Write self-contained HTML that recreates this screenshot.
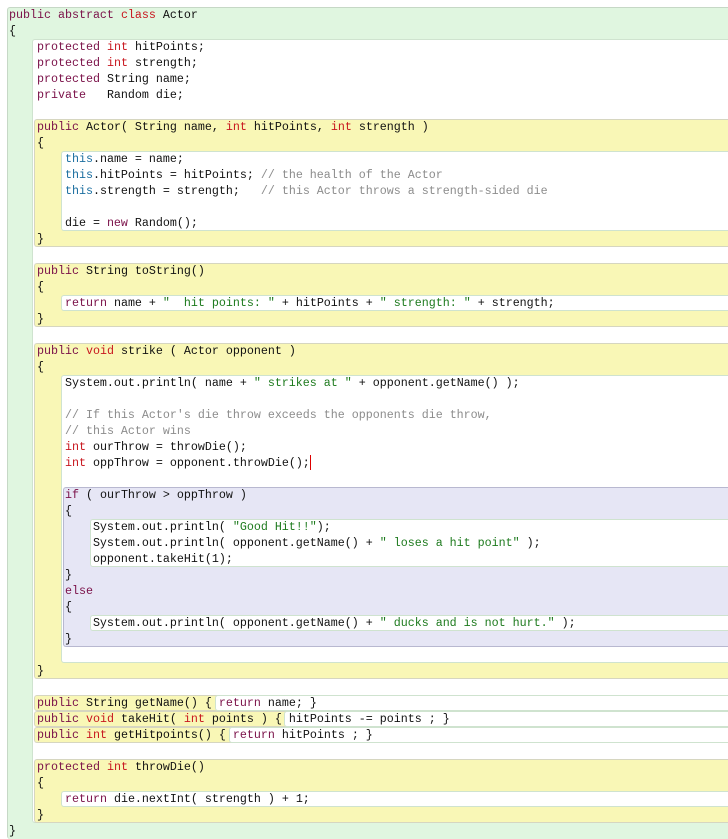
<!DOCTYPE html>
<html><head><meta charset="utf-8"><style>
html,body{margin:0;width:728px;height:839px;overflow:hidden;background:#fff;position:relative}
.b{position:absolute;box-sizing:border-box;border-radius:3px}
.g{background:#e0f6e0;border:1px solid #c6d8c6;border-bottom:none}
.w{background:#fff;border:1px solid #cfe3cf;border-right:none}
.y{background:#f9f7b6;border:1px solid #d6d6c0;border-right:none}
.p{background:#e6e6f5;border:1px solid #b8b8d0;border-right:none}
pre{position:absolute;left:9px;top:7px;margin:0;font-family:"Liberation Mono",monospace;font-size:11.67px;line-height:16px;color:#111}
.k{color:#7a1048}.r{color:#c8161e}.t{color:#1b6ea0}.s{color:#1d7a1d}.c{color:#8c8c8c}
</style></head><body>
<div class="b g" style="left:7px;top:7px;width:740px;height:832px"></div>
<div class="b w" style="left:32px;top:39px;width:720px;height:784px"></div>
<div class="b y" style="left:34px;top:119px;width:720px;height:128px"></div>
<div class="b w" style="left:61px;top:151px;width:700px;height:80px"></div>
<div class="b y" style="left:34px;top:263px;width:720px;height:64px"></div>
<div class="b w" style="left:61px;top:295px;width:700px;height:16px"></div>
<div class="b y" style="left:34px;top:343px;width:720px;height:336px"></div>
<div class="b w" style="left:61px;top:375px;width:700px;height:288px"></div>
<div class="b p" style="left:63px;top:487px;width:700px;height:160px"></div>
<div class="b w" style="left:90px;top:519px;width:700px;height:48px"></div>
<div class="b w" style="left:90px;top:615px;width:700px;height:16px"></div>
<div class="b y" style="left:34px;top:695px;width:720px;height:16px"></div>
<div class="b w" style="left:215px;top:695px;width:600px;height:16px"></div>
<div class="b y" style="left:34px;top:711px;width:720px;height:16px"></div>
<div class="b w" style="left:284px;top:711px;width:600px;height:16px"></div>
<div class="b y" style="left:34px;top:727px;width:720px;height:16px"></div>
<div class="b w" style="left:229px;top:727px;width:600px;height:16px"></div>
<div class="b y" style="left:34px;top:759px;width:720px;height:64px"></div>
<div class="b w" style="left:61px;top:791px;width:700px;height:16px"></div>
<div style="position:absolute;left:310px;top:455px;width:1px;height:15px;background:#d00"></div>
<pre><span class="k">public abstract</span> <span class="r">class</span> Actor
{
    <span class="k">protected</span> <span class="r">int</span> hitPoints;
    <span class="k">protected</span> <span class="r">int</span> strength;
    <span class="k">protected</span> String name;
    <span class="k">private</span>   Random die;

    <span class="k">public</span> Actor( String name, <span class="r">int</span> hitPoints, <span class="r">int</span> strength )
    {
        <span class="t">this</span>.name = name;
        <span class="t">this</span>.hitPoints = hitPoints; <span class="c">// the health of the Actor</span>
        <span class="t">this</span>.strength = strength;   <span class="c">// this Actor throws a strength-sided die</span>

        die = <span class="k">new</span> Random();
    }

    <span class="k">public</span> String toString()
    {
        <span class="k">return</span> name + <span class="s">"  hit points: "</span> + hitPoints + <span class="s">" strength: "</span> + strength;
    }

    <span class="k">public</span> <span class="r">void</span> strike ( Actor opponent )
    {
        System.out.println( name + <span class="s">" strikes at "</span> + opponent.getName() );

        <span class="c">// If this Actor's die throw exceeds the opponents die throw,</span>
        <span class="c">// this Actor wins</span>
        <span class="r">int</span> ourThrow = throwDie();
        <span class="r">int</span> oppThrow = opponent.throwDie();

        <span class="k">if</span> ( ourThrow &gt; oppThrow )
        {
            System.out.println( <span class="s">"Good Hit!!"</span>);
            System.out.println( opponent.getName() + <span class="s">" loses a hit point"</span> );
            opponent.takeHit(1);
        }
        <span class="k">else</span>
        {
            System.out.println( opponent.getName() + <span class="s">" ducks and is not hurt."</span> );
        }

    }

    <span class="k">public</span> String getName() { <span class="k">return</span> name; }
    <span class="k">public</span> <span class="r">void</span> takeHit( <span class="r">int</span> points ) { hitPoints -= points ; }
    <span class="k">public</span> <span class="r">int</span> getHitpoints() { <span class="k">return</span> hitPoints ; }

    <span class="k">protected</span> <span class="r">int</span> throwDie()
    {
        <span class="k">return</span> die.nextInt( strength ) + 1;
    }
}</pre>
</body></html>
